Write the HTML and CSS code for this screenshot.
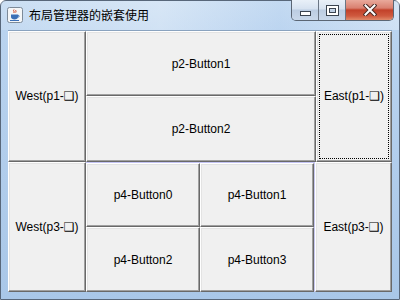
FILE: index.html
```html
<!DOCTYPE html>
<html>
<head>
<meta charset="utf-8">
<link rel="stylesheet" href="styles.css">
</head>
<body>
<div class="window">
  <div class="titlebar">
    <svg class="appicon" width="16" height="16" viewBox="0 0 16 16">
      <rect x="0.5" y="0.5" width="15" height="15" rx="2" fill="#f4f6f8" stroke="#7d8a99"/>
      <path d="M7 2.5c-1.5 1.2 1.2 2 -0.2 3.5M9 3c-1 1 0.8 1.5 -0.3 2.6" stroke="#d04020" stroke-width="1" fill="none"/>
      <path d="M4 7.5h7v2.5c0 1.5-1.5 2.5-3.5 2.5S4 11.5 4 10z" fill="#3b6fb6"/>
      <path d="M11 8.2c1.5 0 1.5 2 0 2" stroke="#3b6fb6" stroke-width="1" fill="none"/>
      <path d="M3 13.5h9" stroke="#3b6fb6" stroke-width="1"/>
    </svg>
    <span class="title">布局管理器的嵌套使用</span>
    <div class="controls">
      <div class="ctl min"><span class="minbar"></span></div>
      <div class="ctl max"><span class="maxbox"></span></div>
      <div class="ctl close">
        <svg width="14" height="12" viewBox="0 0 14 12">
          <path d="M2.5 1.5L11.5 10.5M11.5 1.5L2.5 10.5" stroke="#4a2a24" stroke-width="4" stroke-linecap="square"/>
          <path d="M2.5 1.5L11.5 10.5M11.5 1.5L2.5 10.5" stroke="#ffffff" stroke-width="2" stroke-linecap="square"/>
        </svg>
      </div>
    </div>
  </div>
  <div class="content">
    <div class="row row1">
      <div class="btn">West(p1-<span class="sym">❑</span>)</div>
      <div class="stack">
        <div class="btn">p2-Button1</div>
        <div class="btn">p2-Button2</div>
      </div>
      <div class="btn focus">East(p1-<span class="sym">❑</span>)</div>
    </div>
    <div class="row row2">
      <div class="btn">West(p3-<span class="sym">❑</span>)</div>
      <div class="grid4">
        <div class="btn">p4-Button0</div>
        <div class="btn">p4-Button1</div>
        <div class="btn">p4-Button2</div>
        <div class="btn">p4-Button3</div>
      </div>
      <div class="btn">East(p3-<span class="sym">❑</span>)</div>
    </div>
  </div>
</div>
</body>
</html>
```
FILE: styles.css
```css
html, body {
  margin: 0;
  padding: 0;
  width: 400px;
  height: 300px;
  overflow: hidden;
  background: #ffffff;
}
.window {
  box-sizing: border-box;
  width: 400px;
  height: 300px;
  border: 1px solid #58677a;
  border-radius: 6px 6px 0 0;
  background: linear-gradient(180deg, #c2d9f1 0%, #b9d3ef 10%, #a9c7e8 100%);
  display: flex;
  flex-direction: column;
  padding: 0 7px 7px 7px;
  font-family: "Liberation Sans", Arial, sans-serif;
}
.titlebar {
  height: 29px;
  flex: none;
  display: flex;
  align-items: flex-start;
  margin: 0 -7px;
  padding: 0 6px;
  background: linear-gradient(90deg, rgba(255,255,255,0.15) 0%, rgba(255,255,255,0.35) 40%, rgba(200,220,245,0.2) 70%, rgba(255,255,255,0.3) 100%);
}
.appicon {
  margin-top: 6px;
  flex: none;
}
.title {
  margin-left: 6px;
  margin-top: 5px;
  font-family: "Noto Sans CJK SC", sans-serif;
  font-size: 12px;
  line-height: 17px;
  color: #000;
}
.controls {
  margin-left: auto;
  margin-right: -1px;
  margin-top: -1px;
  display: flex;
  height: 20px;
  border: 1px solid #5b6674;
  border-top: none;
  border-radius: 0 0 5px 5px;
  overflow: hidden;
}
.ctl {
  height: 20px;
  display: flex;
  align-items: center;
  justify-content: center;
  box-sizing: border-box;
}
.min, .max {
  width: 27px;
  background: linear-gradient(180deg, #e9f0f8 0%, #d6e2f0 45%, #bccde2 50%, #c9d8ea 100%);
  border-right: 1px solid #6b7684;
}
.minbar {
  width: 9px;
  height: 3px;
  background: #fff;
  border: 1px solid #3b4450;
  margin-top: 7px;
}
.maxbox {
  width: 7px;
  height: 5px;
  border: 2px solid #fff;
  outline: 1px solid #3b4450;
  box-shadow: inset 0 0 0 1px #3b4450;
}
.close {
  width: 47px;
  background: linear-gradient(180deg, #e9a99b 0%, #d98070 40%, #c2412a 50%, #cf5a3f 80%, #e08a6a 100%);
}
.content {
  flex: 1;
  display: grid;
  grid-template-rows: 1fr 1fr;
  background: #f0f0f0;
  border-top: 1px solid #8aa3bf;
  margin-top: 0;
}
.row {
  display: grid;
  min-height: 0;
}
.row1 {
  grid-template-columns: 78px 1fr 76px;
}
.row2 {
  grid-template-columns: 78px 1fr 77px;
}
.stack {
  display: grid;
  grid-template-rows: 1fr 1fr;
}
.grid4 {
  display: grid;
  grid-template-columns: 1fr 1fr;
  grid-template-rows: 1fr 1fr;
  border-top: 1px solid #c4c4f4;
  border-right: 1px solid #c8c8f0;
}
.btn {
  box-sizing: border-box;
  background: #f0f0f0;
  border-top: 1px solid #ffffff;
  border-left: 1px solid #ffffff;
  border-right: 1px solid #696969;
  border-bottom: 1px solid #696969;
  box-shadow: inset -1px -1px 0 #a0a0a0, inset 1px 1px 0 #e3e3e3;
  display: flex;
  align-items: center;
  justify-content: center;
  font-size: 12px;
  color: #000;
  white-space: nowrap;
  min-height: 0;
}
.sym {
  font-family: "DejaVu Sans", sans-serif;
  font-size: 12px;
  font-weight: bold;
  line-height: 12px;
}
.focus {
  outline: 1px dotted #000;
  outline-offset: -4px;
}
```
